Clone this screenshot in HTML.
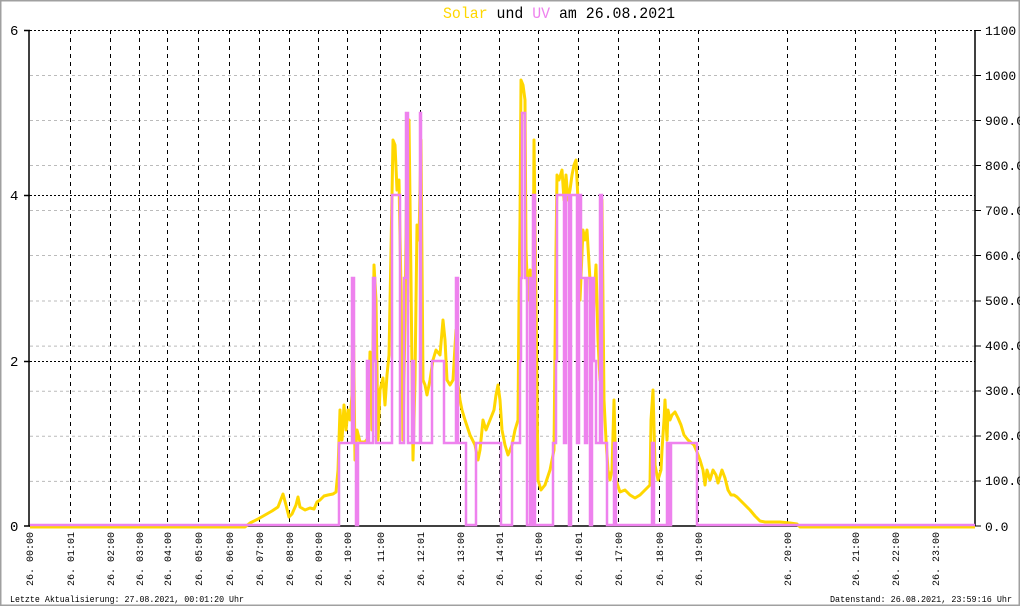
<!DOCTYPE html>
<html><head><meta charset="utf-8"><style>
html,body{margin:0;padding:0;background:#fff}
svg{display:block}
text{font-family:"Liberation Mono","DejaVu Sans Mono",monospace}
</style></head><body>
<svg width="1020" height="606" viewBox="0 0 1020 606" xmlns="http://www.w3.org/2000/svg">
<rect x="0.5" y="0.5" width="1019" height="605" fill="#fff" stroke="#a0a0a0" stroke-width="2"/>
<text x="443" y="18" font-size="16" textLength="232" lengthAdjust="spacingAndGlyphs"><tspan fill="#FFD700">Solar</tspan><tspan fill="#000"> und </tspan><tspan fill="#EE82EE">UV</tspan><tspan fill="#000"> am 26.08.2021</tspan></text>
<g stroke="#bbb" stroke-width="1" stroke-dasharray="3,3">
<line x1="30" x2="975" y1="481.4" y2="481.4"/><line x1="30" x2="975" y1="436.3" y2="436.3"/>
<line x1="30" x2="975" y1="391.2" y2="391.2"/><line x1="30" x2="975" y1="346.1" y2="346.1"/>
<line x1="30" x2="975" y1="301" y2="301"/><line x1="30" x2="975" y1="255.5" y2="255.5"/>
<line x1="30" x2="975" y1="210.5" y2="210.5"/><line x1="30" x2="975" y1="165.5" y2="165.5"/>
<line x1="30" x2="975" y1="120.5" y2="120.5"/><line x1="30" x2="975" y1="75.5" y2="75.5"/>
</g>
<g stroke="#000" stroke-width="1" stroke-dasharray="2,2">
<line x1="30" x2="975" y1="30.5" y2="30.5"/><line x1="30" x2="975" y1="195.5" y2="195.5"/><line x1="30" x2="975" y1="361.5" y2="361.5"/>
</g>
<g stroke="#000" stroke-width="1" stroke-dasharray="4,4">
<line x1="70.5" x2="70.5" y1="30" y2="526"/><line x1="110.5" x2="110.5" y1="30" y2="526"/>
<line x1="139.5" x2="139.5" y1="30" y2="526"/><line x1="167.5" x2="167.5" y1="30" y2="526"/>
<line x1="198.5" x2="198.5" y1="30" y2="526"/><line x1="229.5" x2="229.5" y1="30" y2="526"/>
<line x1="259.5" x2="259.5" y1="30" y2="526"/><line x1="289.5" x2="289.5" y1="30" y2="526"/>
<line x1="318.5" x2="318.5" y1="30" y2="526"/><line x1="347.5" x2="347.5" y1="30" y2="526"/>
<line x1="380.5" x2="380.5" y1="30" y2="526"/><line x1="420.5" x2="420.5" y1="30" y2="526"/>
<line x1="460.5" x2="460.5" y1="30" y2="526"/><line x1="499.5" x2="499.5" y1="30" y2="526"/>
<line x1="538.5" x2="538.5" y1="30" y2="526"/><line x1="578.5" x2="578.5" y1="30" y2="526"/>
<line x1="618.5" x2="618.5" y1="30" y2="526"/><line x1="659.5" x2="659.5" y1="30" y2="526"/>
<line x1="698.5" x2="698.5" y1="30" y2="526"/><line x1="787.5" x2="787.5" y1="30" y2="526"/>
<line x1="855.5" x2="855.5" y1="30" y2="526"/><line x1="895.5" x2="895.5" y1="30" y2="526"/>
<line x1="935.5" x2="935.5" y1="30" y2="526"/>
</g>
<g stroke="#000" stroke-width="1.5">
<line x1="29" y1="30" x2="29" y2="526"/><line x1="975" y1="30" x2="975" y2="526"/>
<line x1="29" y1="526" x2="975" y2="526"/>
<line x1="24" y1="30.5" x2="30" y2="30.5"/><line x1="24" y1="195.5" x2="30" y2="195.5"/><line x1="24" y1="361.5" x2="30" y2="361.5"/><line x1="24" y1="526" x2="30" y2="526"/>
</g>
<g stroke="#000" stroke-width="1">
<line x1="975" x2="981" y1="30.5" y2="30.5"/><line x1="975" x2="981" y1="75.5" y2="75.5"/><line x1="975" x2="981" y1="120.5" y2="120.5"/><line x1="975" x2="981" y1="165.5" y2="165.5"/><line x1="975" x2="981" y1="210.5" y2="210.5"/><line x1="975" x2="981" y1="255.5" y2="255.5"/><line x1="975" x2="981" y1="301" y2="301"/><line x1="975" x2="981" y1="346" y2="346"/><line x1="975" x2="981" y1="391" y2="391"/><line x1="975" x2="981" y1="436" y2="436"/><line x1="975" x2="981" y1="481" y2="481"/><line x1="975" x2="981" y1="526" y2="526"/>
</g>
<polyline fill="none" stroke="#FFD700" stroke-width="3" stroke-linejoin="round" points="30,527 245,527 250,523 258,519 265,515 272,511 278,507 283,494 286,505 289,517 292,514 296,505 298,497 300,507 305,510 310,508 314,509 317,502 320,500 324,496 328,495 333,494 336,492 338,470 340,410 342,440 344,405 346,430 348,410 350,420 352,395 353,290 355,460 357,430 360,442 365,442 368,438 370,352 372,430 374,265 376,300 378,440 380,390 383,378 385,405 387,375 389,355 391,250 393,140 395,145 397,190 399,180 401,290 403,440 405,320 407,150 409,120 411,280 413,460 415,380 417,225 419,240 421,140 423,380 425,385 427,395 430,380 433,360 436,350 440,355 443,320 445,340 447,380 450,385 453,380 456,330 458,385 460,400 462,410 465,420 470,435 475,445 478,460 480,450 483,420 486,430 490,420 494,410 496,395 498,385 500,400 502,430 505,445 508,455 512,445 515,430 518,420 519,300 520,220 521,80 523,85 525,100 526,250 528,300 530,270 532,480 534,140 536,300 538,480 541,490 545,485 550,470 554,450 555,350 556,250 557,175 559,180 562,170 564,200 566,175 568,200 570,190 572,175 574,165 576,160 578,200 580,300 583,230 585,240 587,230 590,280 592,350 594,300 596,265 598,340 600,380 602,200 604,400 606,440 608,470 610,480 612,470 614,400 616,480 620,492 625,490 630,495 635,498 640,495 645,490 650,485 651,420 653,390 655,465 658,480 661,470 662,450 664,420 665,400 667,440 668,410 670,420 672,415 675,412 678,418 681,425 684,435 688,440 694,445 697,452 700,460 703,470 705,485 707,470 710,480 713,470 716,475 718,483 722,470 725,478 728,490 731,495 734,495 737,497 740,500 745,505 750,510 755,516 760,521 765,522 770,522 780,522 790,523 797,524 800,527 975,527"/>
<polyline fill="none" stroke="#EE82EE" stroke-width="2.5" points="30,525 339,525 339,443 352,443 352,278 354,278 354,443 356,443 356,525 358,525 358,443 367,443 367,361 369,361 369,443 373,443 373,278 375,278 375,361 376,361 376,443 392,443 392,195 400,195 400,443 404,443 404,278 406,278 406,113 408,113 408,443 412,443 412,361 414,361 414,443 420,443 420,113 421,113 421,443 432,443 432,361 444,361 444,443 456,443 456,278 458,278 458,443 466,443 466,525 476,525 476,443 501,443 501,525 512,525 512,443 520,443 520,361 521,361 521,278 522,278 522,113 525,113 525,278 527,278 527,525 530,525 530,278 532,278 532,525 533,525 533,195 535,195 535,525 537,525 537,525 553,525 553,443 556,443 556,361 557,361 557,195 564,195 564,443 566,443 566,195 569,195 569,525 571,525 571,195 577,195 577,443 579,443 579,195 581,195 581,278 585,278 585,443 587,443 587,278 590,278 590,525 592,525 592,278 594,278 594,361 596,361 596,443 600,443 600,195 602,195 602,443 607,443 607,525 614,525 614,443 616,443 616,525 652,525 652,443 654,443 654,525 667,525 667,443 669,443 669,525 671,525 671,443 697,443 697,525 975,525"/>
<g font-size="14" fill="#000">
<text x="10" y="35">6</text><text x="10" y="200">4</text><text x="10" y="366">2</text><text x="10" y="531">0</text>
</g>
<g font-size="13" fill="#000">
<text x="985" y="35">1100</text><text x="985" y="80">1000</text><text x="985" y="125">900.0</text><text x="985" y="170">800.0</text><text x="985" y="215">700.0</text><text x="985" y="260">600.0</text><text x="985" y="305">500.0</text><text x="985" y="350">400.0</text><text x="985" y="395">300.0</text><text x="985" y="440">200.0</text><text x="985" y="485">100.0</text><text x="985" y="531">0.0</text>
</g>
<g font-size="10" fill="#000">
<text transform="translate(33,586) rotate(-90)" textLength="54" lengthAdjust="spacingAndGlyphs">26. 00:00</text>
<text transform="translate(74,586) rotate(-90)" textLength="54" lengthAdjust="spacingAndGlyphs">26. 01:01</text>
<text transform="translate(114,586) rotate(-90)" textLength="54" lengthAdjust="spacingAndGlyphs">26. 02:00</text>
<text transform="translate(143,586) rotate(-90)" textLength="54" lengthAdjust="spacingAndGlyphs">26. 03:00</text>
<text transform="translate(171,586) rotate(-90)" textLength="54" lengthAdjust="spacingAndGlyphs">26. 04:00</text>
<text transform="translate(202,586) rotate(-90)" textLength="54" lengthAdjust="spacingAndGlyphs">26. 05:00</text>
<text transform="translate(233,586) rotate(-90)" textLength="54" lengthAdjust="spacingAndGlyphs">26. 06:00</text>
<text transform="translate(263,586) rotate(-90)" textLength="54" lengthAdjust="spacingAndGlyphs">26. 07:00</text>
<text transform="translate(293,586) rotate(-90)" textLength="54" lengthAdjust="spacingAndGlyphs">26. 08:00</text>
<text transform="translate(322,586) rotate(-90)" textLength="54" lengthAdjust="spacingAndGlyphs">26. 09:00</text>
<text transform="translate(351,586) rotate(-90)" textLength="54" lengthAdjust="spacingAndGlyphs">26. 10:00</text>
<text transform="translate(384,586) rotate(-90)" textLength="54" lengthAdjust="spacingAndGlyphs">26. 11:00</text>
<text transform="translate(424,586) rotate(-90)" textLength="54" lengthAdjust="spacingAndGlyphs">26. 12:01</text>
<text transform="translate(464,586) rotate(-90)" textLength="54" lengthAdjust="spacingAndGlyphs">26. 13:00</text>
<text transform="translate(503,586) rotate(-90)" textLength="54" lengthAdjust="spacingAndGlyphs">26. 14:01</text>
<text transform="translate(542,586) rotate(-90)" textLength="54" lengthAdjust="spacingAndGlyphs">26. 15:00</text>
<text transform="translate(582,586) rotate(-90)" textLength="54" lengthAdjust="spacingAndGlyphs">26. 16:01</text>
<text transform="translate(622,586) rotate(-90)" textLength="54" lengthAdjust="spacingAndGlyphs">26. 17:00</text>
<text transform="translate(663,586) rotate(-90)" textLength="54" lengthAdjust="spacingAndGlyphs">26. 18:00</text>
<text transform="translate(702,586) rotate(-90)" textLength="54" lengthAdjust="spacingAndGlyphs">26. 19:00</text>
<text transform="translate(791,586) rotate(-90)" textLength="54" lengthAdjust="spacingAndGlyphs">26. 20:00</text>
<text transform="translate(859,586) rotate(-90)" textLength="54" lengthAdjust="spacingAndGlyphs">26. 21:00</text>
<text transform="translate(899,586) rotate(-90)" textLength="54" lengthAdjust="spacingAndGlyphs">26. 22:00</text>
<text transform="translate(939,586) rotate(-90)" textLength="54" lengthAdjust="spacingAndGlyphs">26. 23:00</text>
</g>
<text x="10" y="602" font-size="9" fill="#000" textLength="234" lengthAdjust="spacingAndGlyphs">Letzte Aktualisierung: 27.08.2021, 00:01:20 Uhr</text>
<text x="830" y="602" font-size="9" fill="#000" textLength="182" lengthAdjust="spacingAndGlyphs">Datenstand: 26.08.2021, 23:59:16 Uhr</text>
</svg>
</body></html>
